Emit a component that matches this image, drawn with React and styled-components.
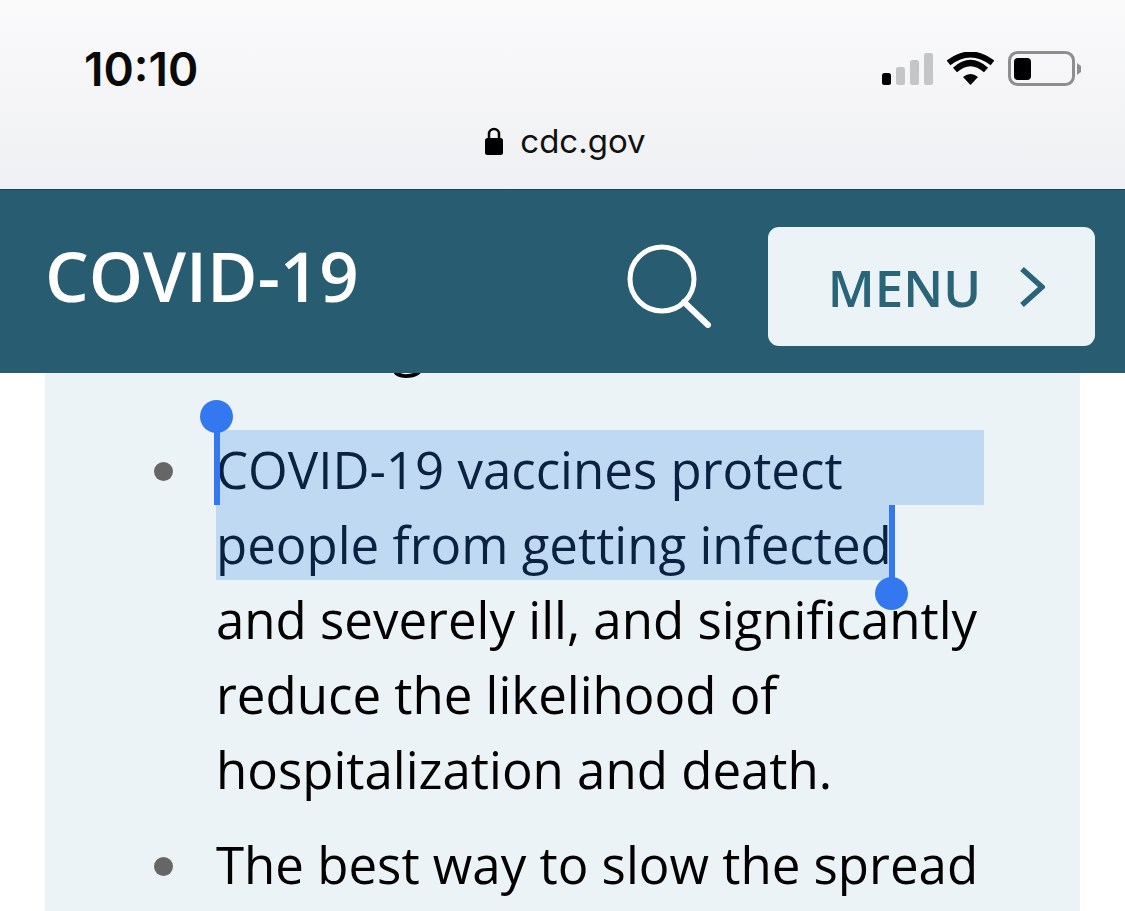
import styled, { createGlobalStyle } from "styled-components";

const Global = createGlobalStyle`
  html, body { margin: 0; padding: 0; background: #fff; }
  body { font-family: "Open Sans", sans-serif; }
`;

const Page = styled.div`
  width: 1125px;
  height: 911px;
  overflow: hidden;
  display: flex;
  flex-direction: column;
`;

const Chrome = styled.div`
  height: 189px;
  flex: none;
  box-sizing: border-box;
  background: linear-gradient(#fafafb, #eff0f3);
  padding: 43px 43px 0 84px;
`;

const StatusRow = styled.div`
  display: flex;
  justify-content: space-between;
  align-items: center;
  height: 52px;
`;

const Time = styled.div`
  font-family: Inter, sans-serif;
  font-weight: 600;
  font-size: 46px;
  color: #0a0a0a;
`;

const StatusIcons = styled.div`
  display: flex;
  align-items: center;
`;

const UrlRow = styled.div`
  display: flex;
  justify-content: center;
  align-items: center;
  gap: 17px;
  margin: 26px 0 0 -35px;
`;

const Url = styled.span`
  font-family: Inter, sans-serif;
  font-size: 33px;
  color: #111;
`;

const Header = styled.header`
  height: 184px;
  flex: none;
  box-sizing: border-box;
  position: relative;
  z-index: 1;
  background: #285c70;
  border-top: 1px solid #1d4352;
  display: flex;
  align-items: center;
  padding: 0 30px 0 45px;
`;

const Title = styled.div`
  font-weight: 600;
  font-size: 69px;
  color: #fff;
  margin-top: -14px;
  flex: 1;
`;

const SearchButton = styled.div`
  display: flex;
  margin: 8px 56px 0 0;
`;

const MenuButton = styled.div`
  width: 327px;
  height: 119px;
  margin-top: 9px;
  padding: 2px 0 0 10px;
  box-sizing: border-box;
  border-radius: 11px;
  background: #ebf3f6;
  color: #2a6478;
  display: flex;
  align-items: center;
  justify-content: center;
  gap: 38px;
  font-weight: 600;
  font-size: 51px;
`;

const Panel = styled.main`
  flex: 1;
  margin: 0 45px;
  background: #ebf3f6;
`;

const Heading = styled.h2`
  margin: -47px 0 0 225px;
  font-weight: 400;
  font-size: 60px;
  line-height: 30px;
  color: #000;
`;

const List = styled.ul`
  list-style: none;
  margin: 74px 0 0;
  padding: 0 0 0 109px;
`;

const Item = styled.li`
  display: flex;
  margin-bottom: 20px;
`;

const Bullet = styled.span`
  flex: none;
  width: 19px;
  height: 19px;
  border-radius: 50%;
  background: #666;
  margin: 32px 43px 0 0;
`;

const Text = styled.div`
  width: 768px;
  font-size: 51px;
  line-height: 75px;
  color: #000;
  white-space: nowrap;
`;

const Line = styled.div`
  position: relative;
  box-sizing: border-box;
  height: 75px;
  padding-top: 2px;
  ${(p) => p.$full && "background: #c0d9f3; color: #0a2240;"}
  ${(p) => p.$part && "background: #c0d9f3; color: #0a2240; width: 674px;"}
`;

const Caret = styled.span`
  position: absolute;
  width: 6px;
  background: #3478f0;
  left: ${(p) => p.$left}px;
  top: ${(p) => p.$top}px;
  height: ${(p) => p.$height}px;
`;

const Knob = styled.span`
  position: absolute;
  width: 33px;
  height: 33px;
  border-radius: 50%;
  background: #3478f0;
  left: ${(p) => p.$left}px;
  top: ${(p) => p.$top}px;
`;

function Signal() {
  return (
    <svg width="52" height="34" viewBox="0 0 52 34" style={{ marginRight: 13 }}>
      <rect x="0" y="21" width="9" height="12" rx="2.5" fill="#000" />
      <rect x="14" y="15" width="9" height="18" rx="2.5" fill="#c4c5c6" />
      <rect x="28" y="8" width="9" height="25" rx="2.5" fill="#c4c5c6" />
      <rect x="42" y="1" width="9" height="32" rx="2.5" fill="#c4c5c6" />
    </svg>
  );
}

function Wifi() {
  return (
    <svg width="47" height="34" viewBox="0 0 47 34" style={{ marginRight: 14 }}>
      <path d="M23.500 33 L16 25 Q23.500 19 31 25 Z" fill="#000" />
      <path d="M8 18 Q23.500 4 39 18" fill="none" stroke="#000" strokeWidth="6" />
      <path d="M1.500 11 Q23.500 -6 45.500 11" fill="none" stroke="#000" strokeWidth="6" />
    </svg>
  );
}

function Battery() {
  return (
    <svg width="74" height="36" viewBox="0 0 74 36">
      <rect x="1.500" y="1.500" width="64" height="32" rx="8" fill="none" stroke="#8e8e8e" strokeWidth="3" />
      <rect x="6" y="7" width="17" height="22" rx="4" fill="#000" />
      <path d="M69 12 L73 15 V21 L69 24 Z" fill="#8e8e8e" />
    </svg>
  );
}

function Lock() {
  return (
    <svg width="18" height="28" viewBox="0 0 18 28">
      <path d="M4 12 V7 a5 5 0 0 1 10 0 V12" fill="none" stroke="#000" strokeWidth="2.500" />
      <rect x="0" y="11" width="18" height="17" rx="2.500" fill="#000" />
    </svg>
  );
}

function SearchIcon() {
  return (
    <svg width="85" height="84" viewBox="0 0 85 84" fill="none" stroke="#fff">
      <circle cx="35" cy="35" r="32" strokeWidth="5" />
      <path d="M57 58 L81 81" strokeWidth="6" strokeLinecap="round" />
    </svg>
  );
}

function Chevron() {
  return (
    <svg width="26" height="42" viewBox="0 0 26 42" fill="none">
      <path d="M3 3 L23 21 L3 39" stroke="#2a6478" strokeWidth="5.500" />
    </svg>
  );
}

export default function App() {
  return (
    <Page>
      <Global />
      <Chrome>
        <StatusRow>
          <Time>10:10</Time>
          <StatusIcons>
            <Signal />
            <Wifi />
            <Battery />
          </StatusIcons>
        </StatusRow>
        <UrlRow>
          <Lock />
          <Url>cdc.gov</Url>
        </UrlRow>
      </Chrome>
      <Header>
        <Title>COVID-19</Title>
        <SearchButton>
          <SearchIcon />
        </SearchButton>
        <MenuButton>
          MENU
          <Chevron />
        </MenuButton>
      </Header>
      <Panel>
        <Heading>Things</Heading>
        <List>
          <Item>
            <Bullet />
            <Text>
              <Line $full>
                <Knob $left={-16} $top={-30} />
                <Caret $left={-2} $top={-10} $height={85} />
                COVID-19 vaccines protect
              </Line>
              <Line $part>
                people from getting infected
                <Caret $left={673} $top={0} $height={75} />
                <Knob $left={659} $top={72} />
              </Line>
              <Line>and severely ill, and significantly</Line>
              <Line>reduce the likelihood of</Line>
              <Line>hospitalization and death.</Line>
            </Text>
          </Item>
          <Item>
            <Bullet />
            <Text>
              <Line>The best way to slow the spread</Line>
            </Text>
          </Item>
        </List>
      </Panel>
    </Page>
  );
}
